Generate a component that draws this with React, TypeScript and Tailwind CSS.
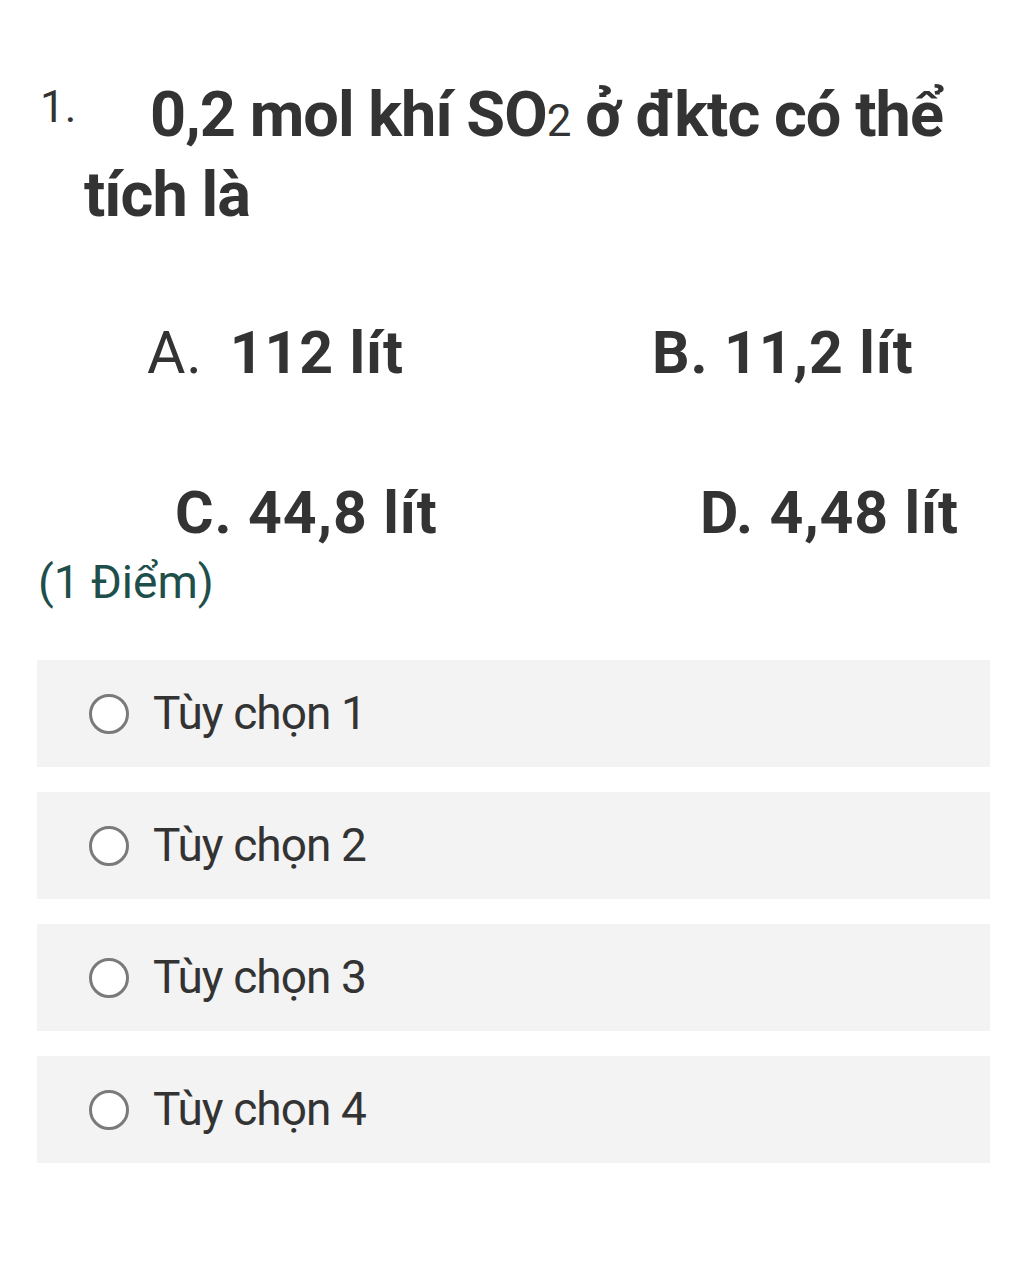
const options = ['Tùy chọn 1', 'Tùy chọn 2', 'Tùy chọn 3', 'Tùy chọn 4']

export default function App() {
  return (
    <div className="min-h-[1280px] bg-white text-[#333333] font-['Roboto',sans-serif]">
      {/* question */}
      <div className="pt-[78px] pl-[84px] pr-[30px] -indent-[44px] text-[63px] leading-[74px] font-bold tracking-[-0.015em]">
        <span className="relative -top-[14px] inline-block w-[110px] indent-0 text-[44px] font-normal tracking-normal">1.</span>
        0,2 mol khí SO<span className="text-[44px] font-normal">2</span> ở đktc có thể tích là
      </div>

      {/* answers */}
      <div className="mt-[86px] text-[59px] leading-[70px] font-bold tracking-[0.015em]">
        <div className="flex">
          <div className="w-[652px] pl-[147px]">
            <span className="font-normal">A.</span>
            <span className="ml-[27px]">112 lít</span>
          </div>
          <div>B. 11,2 lít</div>
        </div>
        <div className="flex mt-[90px]">
          <div className="w-[700px] pl-[175px]">C. 44,8 lít</div>
          <div>D. 4,48 lít</div>
        </div>
      </div>

      <div className="pl-[38px] pt-[6px] text-[46px] leading-[56px] text-[#1e4f4b]">(1 Điểm)</div>

      {/* choices */}
      <div className="mt-[50px] ml-[37px] w-[953px] flex flex-col gap-[25px]">
        {options.map((o) => (
          <label key={o} className="h-[107px] bg-[#f3f3f3] flex items-center">
            <span className="ml-[52px] w-[40px] h-[40px] rounded-full border-[3px] border-[#7a7a7a] bg-white shrink-0" />
            <span className="ml-[24px] text-[46px] tracking-[-0.02em] text-[#333333]">{o}</span>
          </label>
        ))}
      </div>
    </div>
  )
}
